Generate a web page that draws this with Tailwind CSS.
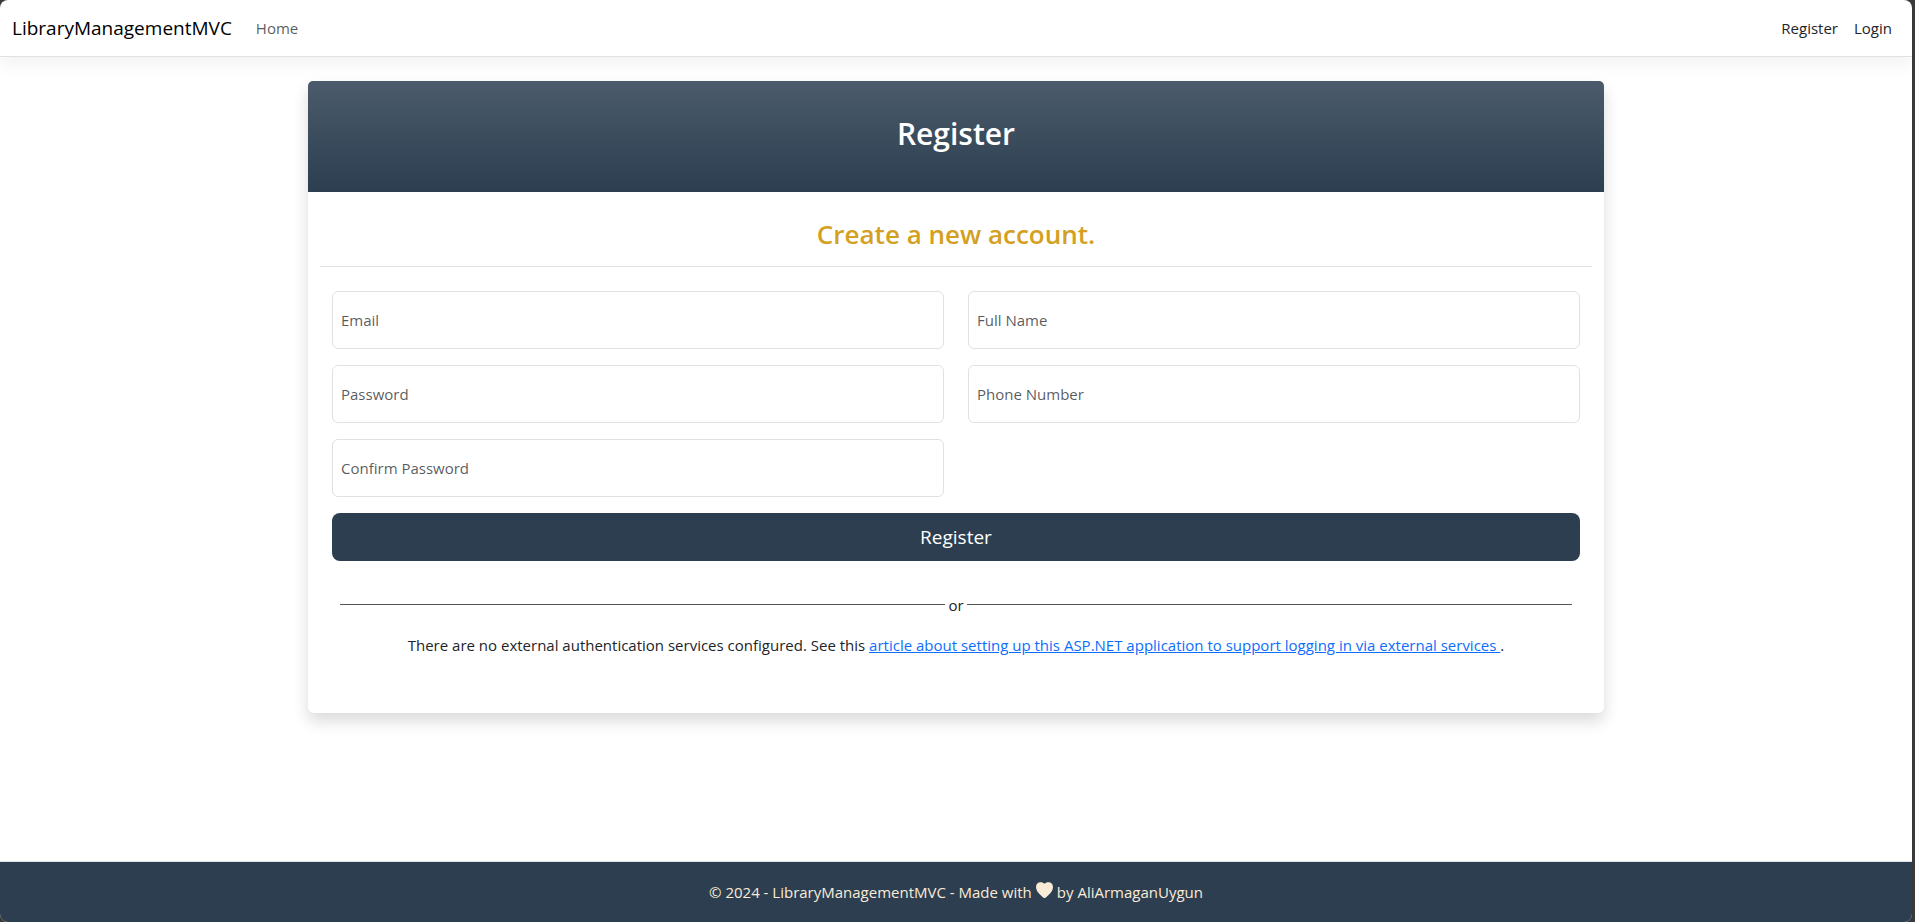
<!DOCTYPE html>
<html lang="en">
<head>
<meta charset="utf-8">
<meta name="viewport" content="width=device-width, initial-scale=1">
<title>Register - LibraryManagementMVC</title>
<script src="https://cdn.jsdelivr.net/npm/@tailwindcss/browser@4"></script>
</head>
<body class="bg-[#3a3a3a] pr-[3px] font-['Open_Sans',sans-serif] text-[15px] leading-6 text-[#212529]">
<div class="flex min-h-screen flex-col overflow-hidden rounded-lg bg-white">
  <header class="border-b border-[#dee2e6] shadow-[0_8px_16px_rgba(0,0,0,0.05)]">
    <nav class="flex h-14 items-center px-3">
      <a href="#" class="mr-6 text-[19px] text-black">LibraryManagementMVC</a>
      <a href="#" class="text-[#212529]/75">Home</a>
      <div class="ml-auto flex gap-4 pr-2">
        <a href="#">Register</a>
        <a href="#">Login</a>
      </div>
    </nav>
  </header>

  <main class="mx-auto w-full max-w-[1320px] grow px-3 pt-6">
    <section class="rounded-md bg-white pb-14 shadow-[0_8px_16px_rgba(0,0,0,0.15)]">
      <div class="flex h-[111px] items-center justify-center rounded-t-[5px] bg-linear-to-b from-[#4b5b6b] to-[#2c3e50] pb-1.5">
        <h1 class="text-[30px] leading-10 font-semibold text-white">Register</h1>
      </div>
      <div class="px-3">
        <h2 class="border-b border-[#dee2e6] pt-[25px] pb-[15px] text-center text-[26px] leading-[34px] font-semibold text-[#d4a01f]">Create a new account.</h2>
        <form class="px-3 pt-6">
          <div class="grid grid-cols-2 gap-x-6 gap-y-4">
            <div class="relative">
              <input id="email" type="email" class="block h-[58px] w-full rounded-md border border-[#dee2e6] px-2">
              <label for="email" class="absolute inset-y-0 left-0 flex items-center pl-[9px] text-[#212529]/75">Email</label>
            </div>
            <div class="relative">
              <input id="name" type="text" class="block h-[58px] w-full rounded-md border border-[#dee2e6] px-2">
              <label for="name" class="absolute inset-y-0 left-0 flex items-center pl-[9px] text-[#212529]/75">Full Name</label>
            </div>
            <div class="relative">
              <input id="password" type="password" class="block h-[58px] w-full rounded-md border border-[#dee2e6] px-2">
              <label for="password" class="absolute inset-y-0 left-0 flex items-center pl-[9px] text-[#212529]/75">Password</label>
            </div>
            <div class="relative">
              <input id="phone" type="tel" class="block h-[58px] w-full rounded-md border border-[#dee2e6] px-2">
              <label for="phone" class="absolute inset-y-0 left-0 flex items-center pl-[9px] text-[#212529]/75">Phone Number</label>
            </div>
            <div class="relative">
              <input id="confirm" type="password" class="block h-[58px] w-full rounded-md border border-[#dee2e6] px-2">
              <label for="confirm" class="absolute inset-y-0 left-0 flex items-center pl-[9px] text-[#212529]/75">Confirm Password</label>
            </div>
          </div>
          <button type="button" class="mt-4 h-12 w-full rounded-lg bg-[#2c3e50] text-[19px] text-white">Register</button>
        </form>
        <div class="mt-8 flex items-center gap-[3px] px-5">
          <span class="mb-0.5 h-px grow bg-[#555657]"></span>
          <span>or</span>
          <span class="mb-0.5 h-px grow bg-[#555657]"></span>
        </div>
        <p class="mt-4 text-center">There are no external authentication services configured. See this <a href="#" class="text-[#0d6efd] underline">article about setting up this ASP.NET application to support logging in via external services </a>.</p>
      </div>
    </section>
  </main>

  <footer class="flex h-[61px] items-center justify-center gap-1 border-t border-[#dee2e6] bg-[#2c3e50] text-[#faebd7]">
    <span>© 2024 - LibraryManagementMVC - Made with</span>
    <svg class="mb-1 h-4 w-[17px]" viewBox="0 0 17 16" fill="currentColor" aria-hidden="true"><path d="M8.500 16C7.800 16 7 15.300 5 13.400C2 10.700 0 8.300 0 5C0 2 2 0.200 4.500 0.200C6.300 0.200 7.700 0.800 8.500 1.800C9.300 0.800 10.700 0.200 12.500 0.200C15 0.200 17 2 17 5C17 8.300 15 10.700 12 13.400C10 15.300 9.200 16 8.500 16Z"/></svg>
    <span>by AliArmaganUygun</span>
  </footer>
</div>
</body>
</html>
